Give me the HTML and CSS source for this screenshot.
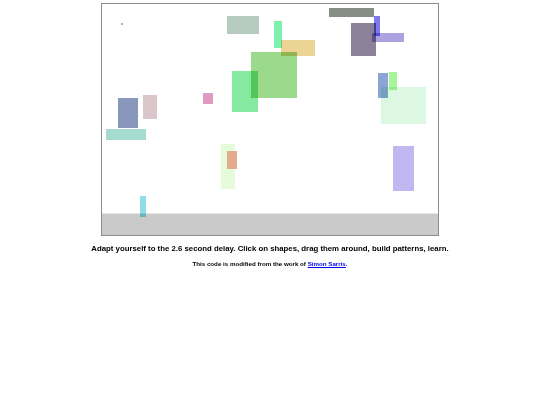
FILE: index.html
```html
<!DOCTYPE html>
<html>
<head>
<meta charset="utf-8">
<link rel="stylesheet" href="styles.css">
</head>
<body>
<div class="page">
  <div class="canvas">
    <div class="field">
      <div class="shape dot"></div>
      <div class="shape sage"></div>
      <div class="shape green-big"></div>
      <div class="shape green-light"></div>
      <div class="shape pink"></div>
      <div class="shape bluegray"></div>
      <div class="shape mauve"></div>
      <div class="shape teal"></div>
      <div class="shape pale-tall"></div>
      <div class="shape orange-small"></div>
      <div class="shape mint-tall"></div>
      <div class="shape orange"></div>
      <div class="shape darkgray"></div>
      <div class="shape slate"></div>
      <div class="shape blue"></div>
      <div class="shape lavender"></div>
      <div class="shape bluegray-small"></div>
      <div class="shape green-small"></div>
      <div class="shape mint-big"></div>
      <div class="shape lavender-tall"></div>
    </div>
    <div class="bar"></div>
    <div class="shape cyan"></div>
  </div>
  <p class="lead">Adapt yourself to the 2.6 second delay. Click on shapes, drag them around, build patterns, learn.</p>
  <p class="credit">This code is modified from the work of <a href="#">Simon Sarris</a>.</p>
</div>
</body>
</html>
```
FILE: styles.css
```css
html, body {
  margin: 0;
  padding: 0;
  background: #ffffff;
}
body {
  font-family: "Liberation Sans", Arial, sans-serif;
  color: #000;
}
.page {
  display: flex;
  flex-direction: column;
  align-items: center;
  padding-top: 3px;
}
.canvas {
  position: relative;
  width: 336px;
  height: 231px;
  border: 1px solid #8c8c8c;
  display: flex;
  flex-direction: column;
  background: #fff;
}
.field {
  flex: 1;
}
.bar {
  height: 21px;
  background: #cacaca;
  border-top: 1px solid #e6e6e6;
}
.shape {
  position: absolute;
  mix-blend-mode: multiply;
}
.dot { left: 19px; top: 19px; width: 2px; height: 2px; background: #d1a2a0; }
.sage { left: 125px; top: 12px; width: 32px; height: 18px; background: #b5cbbd; }
.green-big { left: 149px; top: 48px; width: 46px; height: 46px; background: #9bd98c; }
.green-light { left: 130px; top: 67px; width: 26px; height: 41px; background: #86e9a0; }
.pink { left: 101px; top: 89px; width: 10px; height: 11px; background: #e09cc0; }
.bluegray { left: 16px; top: 94px; width: 20px; height: 30px; background: #8897bb; }
.mauve { left: 41px; top: 91px; width: 14px; height: 24px; background: #dbc7cb; }
.teal { left: 4px; top: 125px; width: 40px; height: 11px; background: #a6dccf; }
.pale-tall { left: 119px; top: 140px; width: 14px; height: 45px; background: #e6fbd9; }
.orange-small { left: 125px; top: 147px; width: 10px; height: 18px; background: #e5ab8a; mix-blend-mode: normal; }
.cyan { left: 38px; top: 192px; width: 6px; height: 21px; background: #8fdde8; }
.mint-tall { left: 172px; top: 17px; width: 8px; height: 27px; background: #7ef0b0; }
.orange { left: 179px; top: 36px; width: 34px; height: 16px; background: #ecd494; }
.darkgray { left: 227px; top: 4px; width: 45px; height: 9px; background: #858f85; }
.slate { left: 249px; top: 19px; width: 25px; height: 33px; background: #8b8199; }
.blue { left: 272px; top: 12px; width: 6px; height: 20px; background: #7b7bef; }
.lavender { left: 270px; top: 29px; width: 32px; height: 9px; background: #aba2df; }
.bluegray-small { left: 276px; top: 69px; width: 10px; height: 25px; background: #8aa5d3; }
.green-small { left: 287px; top: 68px; width: 8px; height: 18px; background: #a6f59a; }
.mint-big { left: 279px; top: 83px; width: 45px; height: 37px; background: #dcf8e3; }
.lavender-tall { left: 291px; top: 142px; width: 21px; height: 45px; background: #c1b7f1; }

.lead {
  margin: 8px 0 0;
  font-size: 7.8px;
  line-height: 10px;
  font-weight: bold;
  text-align: center;
}
.credit {
  margin: 6px 0 0;
  font-size: 6.2px;
  line-height: 8px;
  font-weight: bold;
  text-align: center;
}
.credit a {
  color: #0000ee;
  text-decoration: underline;
}
```
